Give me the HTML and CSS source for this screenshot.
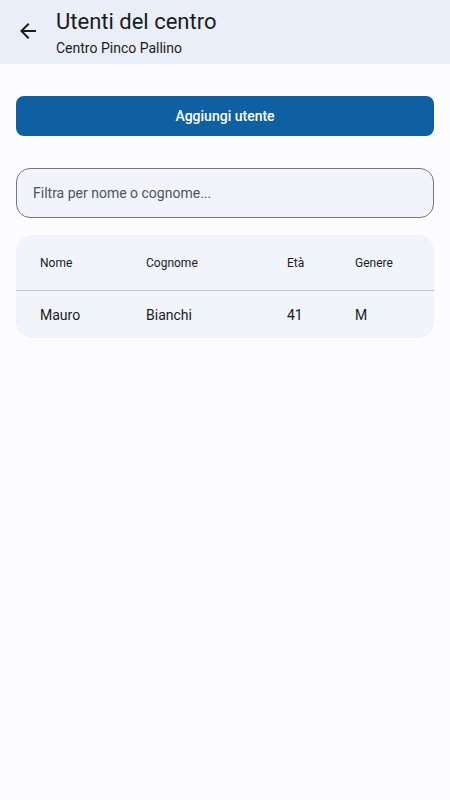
FILE: index.html
```html
<!DOCTYPE html>
<html lang="it">
<head>
<meta charset="utf-8">
<link rel="stylesheet" href="styles.css">
</head>
<body>
<header class="appbar">
  <button class="back" aria-label="Indietro">
    <svg width="24" height="24" viewBox="0 0 24 24"><path d="M20 11H7.83l5.59-5.59L12 4l-8 8 8 8 1.41-1.41L7.83 13H20v-2z" fill="#1a1c1e"/></svg>
  </button>
  <div class="titles">
    <div class="title">Utenti del centro</div>
    <div class="subtitle">Centro Pinco Pallino</div>
  </div>
</header>
<main class="content">
  <button class="primary">Aggiungi utente</button>
  <div class="field">
    <span class="placeholder">Filtra per nome o cognome...</span>
  </div>
  <div class="table">
    <div class="row head">
      <span class="c1">Nome</span><span class="c2">Cognome</span><span class="c3">Età</span><span class="c4">Genere</span>
    </div>
    <div class="row data">
      <span class="c1">Mauro</span><span class="c2">Bianchi</span><span class="c3">41</span><span class="c4">M</span>
    </div>
  </div>
</main>
</body>
</html>
```

FILE: styles.css
```css
* { box-sizing: border-box; }
html, body { margin: 0; padding: 0; }
body {
  background: #fcfcff;
  font-family: Roboto, "Noto Sans", sans-serif;
  color: #1a1c1e;
  width: 450px;
  height: 800px;
}
.appbar {
  height: 64px;
  background: #eaeef6;
  display: flex;
  align-items: flex-start;
}
.back {
  width: 24px; height: 24px;
  margin-left: 16px;
  margin-right: 16px;
  margin-top: 19px;
  padding: 0;
  border: 0;
  background: none;
  display: flex;
}
.titles { display: flex; flex-direction: column; padding-top: 8px; }
.title { font-size: 22px; line-height: 28px; color: #1a1c1e; }
.subtitle { font-size: 14px; line-height: 20px; color: #1a1c1e; margin-top: 2px; }
.content { padding: 32px 16px 0; display: flex; flex-direction: column; }
.primary {
  height: 40px;
  border: 0;
  border-radius: 8px;
  background: #0f5fa3;
  color: #ffffff;
  font-family: Roboto, sans-serif;
  font-size: 14px;
  font-weight: 500;
  padding: 0;
}
.field {
  margin-top: 32px;
  height: 50px;
  border: 1px solid #74777f;
  border-radius: 14px;
  background: #f1f4fb;
  display: flex;
  align-items: center;
  padding-left: 16px;
}
.placeholder { font-size: 14px; color: #4f535a; }
.table {
  margin-top: 17px;
  background: #f1f4fb;
  border-radius: 16px;
}
.row { display: grid; grid-template-columns: 106px 140px 69px 1fr; padding-left: 24px; align-items: center; }
.head { height: 56px; font-size: 12px; border-bottom: 1px solid #c3c6cf; }
.data { height: 47px; font-size: 14px; }
.c3 { padding-left: 1px; }
```
